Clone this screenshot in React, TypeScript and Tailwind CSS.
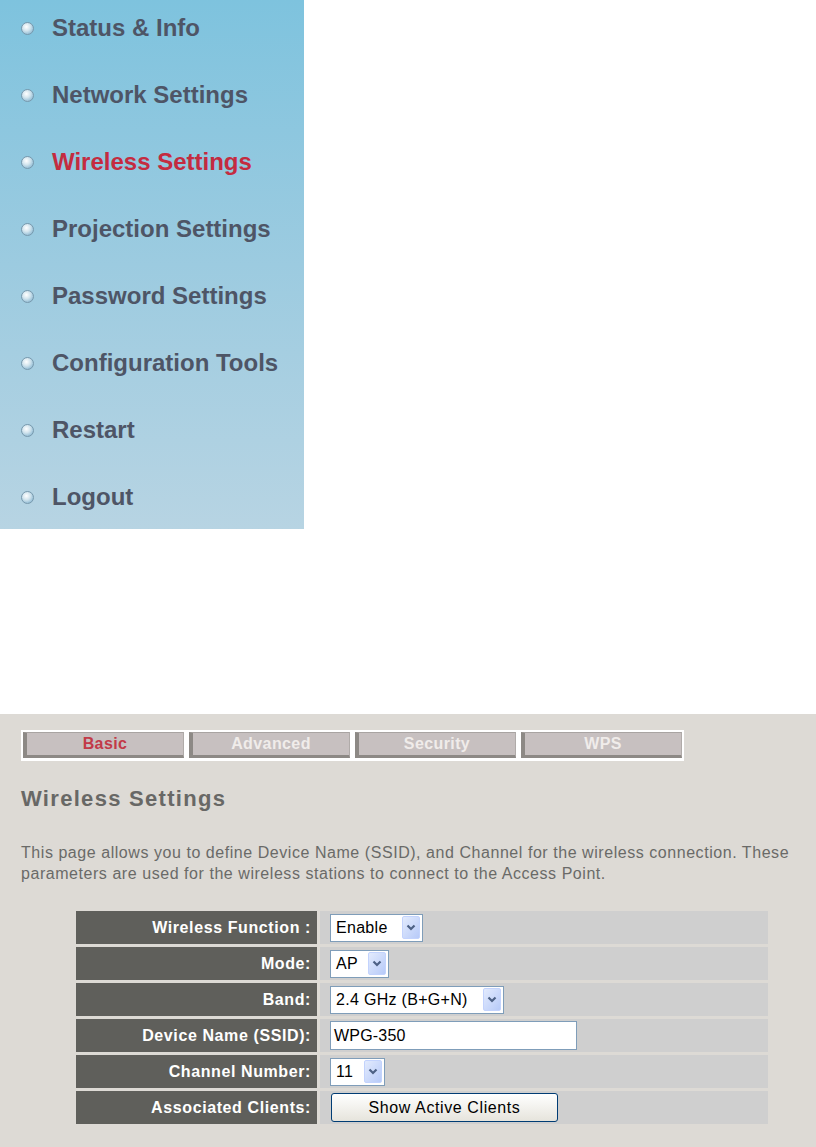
import React from "react";

const menu = [
  "Status & Info",
  "Network Settings",
  "Wireless Settings",
  "Projection Settings",
  "Password Settings",
  "Configuration Tools",
  "Restart",
  "Logout",
];

const tabs = ["Basic", "Advanced", "Security", "WPS"];

function Chevron() {
  return (
    <svg width="10" height="7" viewBox="0 0 10 7">
      <path d="M1.5 1.5 L5 5 L8.5 1.5" fill="none" stroke="#4d6185" strokeWidth="2.2" />
    </svg>
  );
}

function Select({ value, width }: { value: string; width: string }) {
  return (
    <div className={`${width} h-[28px] bg-white border border-[#7f9db9] flex items-center justify-between pl-[5px] pr-[2px]`}>
      <span className="text-[16px] tracking-[0.3px] leading-none text-black">{value}</span>
      <div className="w-[18px] h-[23px] rounded-[2px] bg-gradient-to-br from-[#e3ebfd] to-[#b7caf8] border border-[#c3d3fd] flex items-center justify-center">
        <Chevron />
      </div>
    </div>
  );
}

export default function App() {
  const rows: { label: string; field: React.ReactNode }[] = [
    { label: "Wireless Function :", field: <Select value="Enable" width="w-[93px]" /> },
    { label: "Mode:", field: <Select value="AP" width="w-[59px]" /> },
    { label: "Band:", field: <Select value="2.4 GHz (B+G+N)" width="w-[174px]" /> },
    {
      label: "Device Name (SSID):",
      field: (
        <div className="w-[247px] h-[29px] bg-white border border-[#7f9db9] flex items-center pl-[3px]">
          <span className="text-[16px] tracking-[0.2px] leading-none text-black">WPG-350</span>
        </div>
      ),
    },
    { label: "Channel Number:", field: <Select value="11" width="w-[55px]" /> },
    {
      label: "Associated Clients:",
      field: (
        <div className="ml-[1px] w-[227px] h-[29px] rounded-[3px] border border-[#003c74] bg-gradient-to-b from-white to-[#e6e4dc] flex items-center justify-center">
          <span className="text-[16px] tracking-[0.6px] leading-none text-black">Show Active Clients</span>
        </div>
      ),
    },
  ];

  return (
    <div className="w-[816px] h-[1147px] bg-white flex flex-col overflow-hidden font-['Liberation_Sans',Arial,sans-serif]">
      <nav className="w-[304px] h-[529px] bg-gradient-to-b from-[#7ec3de] via-[#9ccbe0] to-[#b7d4e3] flex flex-col pt-[14px] gap-[39px]">
        {menu.map((m) => (
          <div key={m} className="h-[28px] flex items-center">
            <div className="ml-[21px] w-[13px] h-[13px] rounded-full border border-[#7899ad] bg-[radial-gradient(circle_at_40%_35%,#ffffff,#d3e5ee_40%,#6ea7c8)]" />
            <span
              className={`ml-[18px] text-[24px] font-bold leading-none ${
                m === "Wireless Settings" ? "text-[#c42b40]" : "text-[#4e5566]"
              }`}
            >
              {m}
            </span>
          </div>
        ))}
      </nav>

      <section className="mt-[185px] h-[433px] bg-[#dddad5] pt-[16px] pl-[21px]">
        <div className="inline-flex bg-white pt-[2px] pb-[3px] px-[2px] gap-[5px]">
          {tabs.map((t, i) => (
            <div
              key={t}
              className="w-[161px] h-[26px] bg-[#c7c0c0] border-l-[4px] border-b-[3px] border-t border-r border-l-[#8d8985] border-b-[#8d8985] border-t-[#a9a4a2] border-r-[#b0aba9] flex items-center justify-center"
            >
              <span
                className={`text-[16px] font-bold tracking-[0.4px] leading-none ${
                  i === 0 ? "text-[#c23a48]" : "text-[#f0ecea]"
                }`}
              >
                {t}
              </span>
            </div>
          ))}
        </div>

        <h1 className="mt-[26px] text-[22px] leading-[24px] font-bold tracking-[1.3px] text-[#686866]">
          Wireless Settings
        </h1>

        <p className="mt-[31px] text-[16px] leading-[21px] tracking-[0.55px] text-[#6a6a68] w-[790px]">
          This page allows you to define Device Name (SSID), and Channel for the wireless connection. These
          parameters are used for the wireless stations to connect to the Access Point.
        </p>

        <div className="mt-[27px] ml-[55px] grid grid-cols-[241px_448px] gap-[3px]">
          {rows.map((r) => (
            <React.Fragment key={r.label}>
              <div className="h-[33px] bg-[#5f5f5b] flex items-center justify-end pr-[6px]">
                <span className="text-[16px] font-bold text-white tracking-[0.6px] leading-none">{r.label}</span>
              </div>
              <div className="h-[33px] bg-[#cfcfcf] flex items-center pl-[10px]">{r.field}</div>
            </React.Fragment>
          ))}
        </div>
      </section>
    </div>
  );
}
